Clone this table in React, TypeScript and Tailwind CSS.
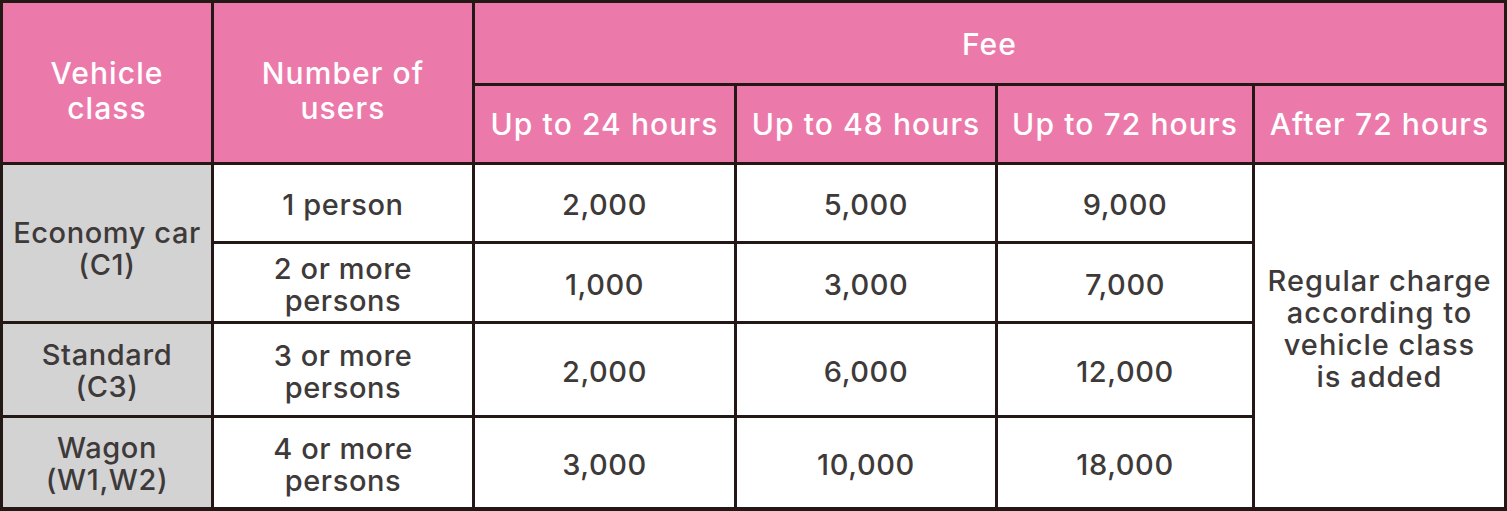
import React from 'react';

const font = { fontFamily: 'Inter, "Noto Sans", "Liberation Sans", sans-serif' };

const head = 'bg-[#eb7aab] text-white flex items-center justify-center text-center text-[30px] tracking-[1.1px]';
const cell = 'bg-white text-[#3e3a39] flex items-center justify-center text-center';
const side = 'bg-[#d3d3d4] text-[#3e3a39] flex items-center justify-center text-center';

const rows = [
  { users: ['1 person'], fees: ['2,000', '5,000', '9,000'] },
  { users: ['2 or more', 'persons'], fees: ['1,000', '3,000', '7,000'] },
  { users: ['3 or more', 'persons'], fees: ['2,000', '6,000', '12,000'] },
  { users: ['4 or more', 'persons'], fees: ['3,000', '10,000', '18,000'] },
];

const rowStart = ['row-start-3', 'row-start-4', 'row-start-5', 'row-start-6'];

export default function App() {
  return (
    <div className="w-[1507px] h-[511px] bg-white" style={font}>
      <div className="grid grid-cols-[208px_258px_259px_258px_254px_249px] grid-rows-[80px_76px_76px_77px_91px_89px] gap-[3px] bg-[#231815] p-[3px] pb-[4px] text-[29px] leading-[32px] font-medium tracking-[0.6px]">
        <div className={`${head} col-start-1 row-start-1 row-span-2 pt-[16px] leading-[35px]`}>
          Vehicle<br />class
        </div>
        <div className={`${head} col-start-2 row-start-1 row-span-2 pt-[16px] leading-[35px]`}>
          Number of<br />users
        </div>
        <div className={`${head} col-start-3 col-span-4 row-start-1 pt-[1px]`}>Fee</div>
        <div className={`${head} col-start-3 row-start-2`}>Up to 24 hours</div>
        <div className={`${head} col-start-4 row-start-2`}>Up to 48 hours</div>
        <div className={`${head} col-start-5 row-start-2`}>Up to 72 hours</div>
        <div className={`${head} col-start-6 row-start-2`}>After 72 hours</div>

        <div className={`${side} col-start-1 row-start-3 row-span-2 pt-[12px]`}>
          Economy car<br />(C1)
        </div>
        <div className={`${side} col-start-1 row-start-5 pt-[2px]`}>
          Standard<br />(C3)
        </div>
        <div className={`${side} col-start-1 row-start-6 pt-[2px]`}>
          Wagon<br />(W1,W2)
        </div>

        {rows.map((r, i) => (
          <React.Fragment key={i}>
            <div className={`${cell} col-start-2 ${rowStart[i]} pt-[4px]`}>
              <span>
                {r.users.map((u, j) => (
                  <React.Fragment key={j}>
                    {j > 0 && <br />}
                    {u}
                  </React.Fragment>
                ))}
              </span>
            </div>
            <div className={`${cell} col-start-3 ${rowStart[i]} pt-[4px]`}>{r.fees[0]}</div>
            <div className={`${cell} col-start-4 ${rowStart[i]} pt-[4px]`}>{r.fees[1]}</div>
            <div className={`${cell} col-start-5 ${rowStart[i]} pt-[4px]`}>{r.fees[2]}</div>
          </React.Fragment>
        ))}

        <div className={`${cell} col-start-6 row-start-3 row-span-4 pb-[14px] tracking-[1px]`}>
          Regular charge<br />according to<br />vehicle class<br />is added
        </div>
      </div>
    </div>
  );
}
